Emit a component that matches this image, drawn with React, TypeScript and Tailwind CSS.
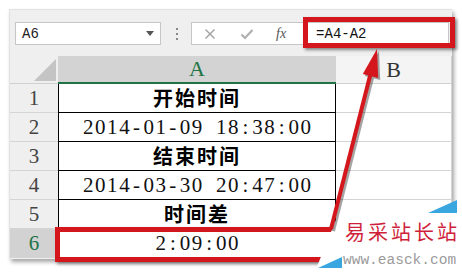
import React from "react";

const MONO_W = 12.1;

function Spaced({ text, w = MONO_W }: { text: string; w?: number }) {
  return (
    <span className="inline-flex whitespace-nowrap">
      {text.split("").map((c, i) => (
        <span key={i} className="inline-block text-center" style={{ width: w }}>
          {c === " " ? "\u00a0" : c}
        </span>
      ))}
    </span>
  );
}

const serif = "font-['Liberation_Serif','Times_New_Roman',serif]";
const mono = "font-['Liberation_Mono','Courier_New',monospace]";
const cjk = "font-['Noto_Sans_CJK_SC','Noto_Sans',sans-serif]";

type Row = { n: string; text: string; cn?: boolean; sel?: boolean };

const rows: Row[] = [
  { n: "1", text: "开始时间", cn: true },
  { n: "2", text: "2014-01-09 18:38:00" },
  { n: "3", text: "结束时间", cn: true },
  { n: "4", text: "2014-03-30 20:47:00" },
  { n: "5", text: "时间差", cn: true },
  { n: "6", text: "2:09:00", sel: true },
];

export default function App() {
  return (
    <div className="relative w-[462px] h-[274px] bg-white overflow-hidden pl-[9px] pt-[9px]">
      {/* Excel window */}
      <div className="w-[443px] h-[250px] bg-[#efefef] border-t border-l border-[#e2e2e2] shadow-[2px_3px_4px_rgba(0,0,0,0.35)] flex flex-col">
        {/* formula bar */}
        <div className="h-[46px] flex items-start pt-[12px] pl-[5px] shrink-0">
          <div className="w-[146px] h-[23px] bg-white border border-[#c6c6c6] flex items-center justify-between pl-[6px] pr-[6px]">
            <span className={`${mono} text-[14px] leading-none text-[#222]`}>A6</span>
            <span className="w-0 h-0 border-l-[4px] border-r-[4px] border-t-[5px] border-l-transparent border-r-transparent border-t-[#555]" />
          </div>
          <div className="ml-[15px] mt-[6px] flex flex-col gap-[3px]">
            <span className="w-[2px] h-[2px] bg-[#888]" />
            <span className="w-[2px] h-[2px] bg-[#888]" />
            <span className="w-[2px] h-[2px] bg-[#888]" />
          </div>
          <div className="ml-[13px] w-[258px] h-[23px] bg-white border border-[#c6c6c6] flex items-center">
            <svg className="ml-[12px]" width="12" height="12" viewBox="0 0 12 12">
              <path d="M1.5 1.5 L10.5 10.5 M10.5 1.5 L1.5 10.5" stroke="#a0a0a0" strokeWidth="1.4" fill="none" />
            </svg>
            <svg className="ml-[24px]" width="14" height="12" viewBox="0 0 14 12">
              <path d="M1.5 6.5 L5 10 L12.5 2" stroke="#b0b0b0" strokeWidth="2.2" fill="none" />
            </svg>
            <span className={`${serif} italic text-[14px] leading-none text-[#555] ml-[22px]`}>fx</span>
            <span className={`${mono} text-[14px] leading-none text-[#111] ml-[30px]`}>=A4-A2</span>
          </div>
        </div>

        {/* grid */}
        <div className="grid grid-cols-[48px_278px_116px] grid-rows-[28px_repeat(6,29px)]">
          <div className="relative bg-[#efefef] border-b border-[#d0d0d0]">
            <div className="absolute right-[2px] bottom-[2px] w-[22px] h-[22px] bg-[#c4c4c4] [clip-path:polygon(100%_0,100%_100%,0_100%)]" />
          </div>
          <div className={`bg-[#d3d3d3] border-b-2 border-[#217346] flex items-center justify-center ${serif} text-[22px] text-[#217346] leading-none`}>
            A
          </div>
          <div className={`bg-[#f4f4f4] border-b border-r border-[#d0d0d0] flex items-center justify-center ${serif} text-[22px] text-[#333] leading-none`}>
            B
          </div>
          {rows.map((r) => (
            <React.Fragment key={r.n}>
              <div
                className={`${r.sel ? "bg-[#d2d2d2] text-[#217346]" : "bg-[#efefef] text-[#444]"} border-b border-[#d4d4d4] flex items-center justify-center ${serif} text-[21px] leading-none`}
              >
                {r.n}
              </div>
              <div className="bg-white border-l border-r border-b border-black flex items-center justify-center">
                {r.cn ? (
                  <span className={`${cjk} font-bold text-[20px] tracking-[2px] leading-none text-black`}>{r.text}</span>
                ) : (
                  <span className={`${serif} text-[21px] leading-none text-[#111]`}>
                    <Spaced text={r.text} />
                  </span>
                )}
              </div>
              <div className="bg-white border-b border-r border-[#d4d4d4]" />
            </React.Fragment>
          ))}
        </div>
      </div>

      {/* red annotation boxes */}
      <div className="absolute left-[303px] top-[17px] w-[152px] h-[31px] border-[5px] border-[#d4161d] shadow-[2px_2px_3px_rgba(0,0,0,0.45)]" />
      <div className="absolute left-[55px] top-[227px] w-[300px] h-[35px] border-[5px] border-[#d4161d] shadow-[2px_2px_3px_rgba(0,0,0,0.45)]" />

      {/* overlay drawing: watermark panel, arrow, triangles */}
      <svg className="absolute left-0 top-0 pointer-events-none" width="462" height="274" viewBox="0 0 462 274">
        <polygon points="339,212 462,212 462,274 314,274" fill="#ffffff" />
        <polygon points="457,200 457,213 428,213" fill="#3aa6e0" />
        <polygon points="342,257 342,268 318,268" fill="#3aa6e0" />
        <g transform="translate(2,2)" opacity="0.35">
          <line x1="331" y1="229" x2="371" y2="72" stroke="#000" strokeWidth="4" />
          <polygon points="377,49 362.8,74 378.2,78" fill="#000" />
        </g>
        <line x1="331" y1="229" x2="371" y2="72" stroke="#d4161d" strokeWidth="4" />
        <polygon points="377,49 362.8,74 378.2,78" fill="#d4161d" />
      </svg>

      {/* watermark text */}
      <div className={`absolute left-[345px] top-[222px] whitespace-nowrap ${cjk} text-[20px] leading-none tracking-[3px] text-[#cf1f3b]`}>
        易采站长站
      </div>
      <div className="absolute left-[343px] top-[253px] whitespace-nowrap font-['Liberation_Mono',monospace] text-[14.5px] leading-none text-[#9b9b9b]">
        www.easck.com
      </div>
    </div>
  );
}
